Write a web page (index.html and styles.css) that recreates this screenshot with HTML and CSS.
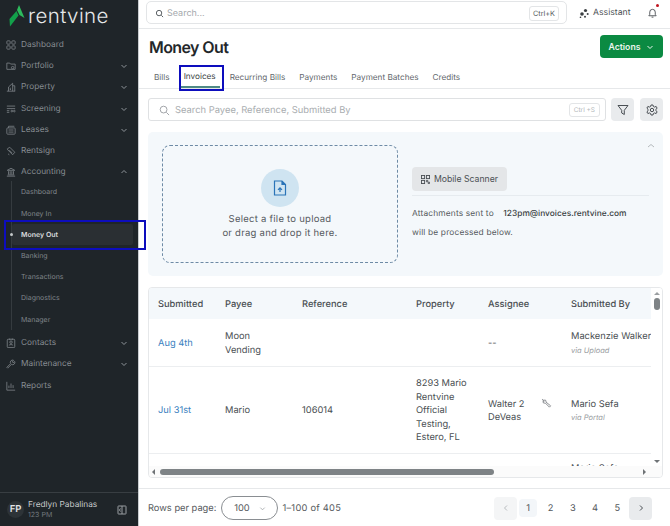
FILE: index.html
```html
<!DOCTYPE html>
<html>
<head>
<title>Money Out</title>
<link rel="stylesheet" href="styles.css">
</head>
<body>

<div class="app">

<div class="sidebar">
  <div class="logo">
    <svg width="16" height="22" viewBox="0 0 16 22"><path d="M10 0 L15.500 13 L10.500 10 L8 5 Z" fill="#2dbb5c"/><path d="M7.500 6 L9.500 10.500 L1 21.500 L0.500 14 Z" fill="#12a04a"/></svg>
    <span class="logo-text">rentvine</span>
  </div>
  <div class="nav">
    <div class="nav-item"><svg class="nav-icon" viewBox="0 0 12 12"><rect x="1" y="1" width="4" height="4" rx="1"/><rect x="7" y="1" width="4" height="4" rx="1"/><rect x="1" y="7" width="4" height="4" rx="1"/><rect x="7" y="7" width="4" height="4" rx="1"/></svg><span class="nav-label">Dashboard</span></div>
    <div class="nav-item"><svg class="nav-icon" viewBox="0 0 12 12"><path d="M1 10V2.500h3.500l1 1.200H11v6.300z"/><circle cx="8" cy="8" r="1.500"/></svg><span class="nav-label">Portfolio</span><svg class="chev" viewBox="0 0 8 8"><path d="M1.500 3l2.500 2.500L6.500 3"/></svg></div>
    <div class="nav-item"><svg class="nav-icon" viewBox="0 0 12 12"><path d="M1 11h10M3 11V6l5-4.500V11M8 4.500h2.500V11M4.500 7.500h1.500M4.500 9h1.500"/></svg><span class="nav-label">Property</span><svg class="chev" viewBox="0 0 8 8"><path d="M1.500 3l2.500 2.500L6.500 3"/></svg></div>
    <div class="nav-item"><svg class="nav-icon" viewBox="0 0 12 12"><path d="M1 2.500h10M1 5.500h10M1 8h3M1 10h3"/><circle cx="7" cy="8.500" r="1"/><circle cx="10" cy="8.500" r="1"/></svg><span class="nav-label">Screening</span><svg class="chev" viewBox="0 0 8 8"><path d="M1.500 3l2.500 2.500L6.500 3"/></svg></div>
    <div class="nav-item"><svg class="nav-icon" viewBox="0 0 12 12"><rect x="1" y="3.500" width="10" height="7.500" rx="1"/><path d="M3 3.500V1.500h7M3 6h6M3 8.500h6"/></svg><span class="nav-label">Leases</span><svg class="chev" viewBox="0 0 8 8"><path d="M1.500 3l2.500 2.500L6.500 3"/></svg></div>
    <div class="nav-item"><svg class="nav-icon" viewBox="0 0 12 12"><path d="M1.500 3.500l3-2 6 6-2.500 3-6-6zM4 5l3.500 3.500M2.500 9.500l1.500 1"/></svg><span class="nav-label">Rentsign</span></div>
    <div class="nav-item"><svg class="nav-icon" viewBox="0 0 12 12"><path d="M1.500 4L6 1.500 10.500 4zM1 11h10M2 9.500h8M3 5v4M5 5v4M7 5v4M9 5v4"/></svg><span class="nav-label">Accounting</span><svg class="chev" viewBox="0 0 8 8"><path d="M1.500 5L4 2.500 6.500 5"/></svg></div>
    <div class="subnav">
      <div class="sub-item">Dashboard</div>
      <div class="sub-item">Money In</div>
      <div class="sub-item active"><span class="dot"></span>Money Out</div>
      <div class="sub-item">Banking</div>
      <div class="sub-item">Transactions</div>
      <div class="sub-item">Diagnostics</div>
      <div class="sub-item">Manager</div>
    </div>
    <div class="nav-item"><svg class="nav-icon" viewBox="0 0 12 12"><rect x="1.500" y="1.500" width="9" height="10" rx="1"/><circle cx="6" cy="5" r="1.500"/><path d="M3.500 9c.5-1.500 4.500-1.500 5 0M4.500.500v2M7.500.500v2"/></svg><span class="nav-label">Contacts</span><svg class="chev" viewBox="0 0 8 8"><path d="M1.500 3l2.500 2.500L6.500 3"/></svg></div>
    <div class="nav-item"><svg class="nav-icon" viewBox="0 0 12 12"><path d="M1 10l4.500-4.500a2.800 2.800 0 0 1 3.500-4L7.500 3.500l1 1L10.500 3a2.800 2.800 0 0 1-4 3.500L2 11z"/></svg><span class="nav-label">Maintenance</span><svg class="chev" viewBox="0 0 8 8"><path d="M1.500 3l2.500 2.500L6.500 3"/></svg></div>
    <div class="nav-item"><svg class="nav-icon" viewBox="0 0 12 12"><path d="M1 1v10h10M3.500 8.500V5.500M6 8.500V3M8.500 8.500V5"/></svg><span class="nav-label">Reports</span></div>
  </div>
  <div class="user">
    <div class="avatar">FP</div>
    <div class="user-info">
      <div class="user-name">Fredlyn Pabalinas</div>
      <div class="user-org">123 PM</div>
    </div>
    <svg class="collapse" viewBox="0 0 10 10"><rect x="1" y="1" width="8" height="8" rx="0.500"/><path d="M5 1v8M3.500 3.500L2.500 5l1 1.500"/></svg>
  </div>
</div>

<div class="main">

  <div class="topbar">
    <div class="global-search">
      <svg class="icon-sm" viewBox="0 0 10 10"><circle cx="4.500" cy="4.500" r="3"/><path d="M7 7l2 2"/></svg>
      <span class="placeholder">Search...</span>
      <span class="kbd">Ctrl+K</span>
    </div>
    <div class="assistant">
      <svg class="icon-assist" viewBox="0 0 10 10"><circle cx="3" cy="6" r="1.800" fill="#3c4043"/><circle cx="6.500" cy="2.500" r="1.600" fill="#3c4043"/><circle cx="8.700" cy="6" r="1" fill="#3c4043"/><circle cx="6" cy="8.700" r="1" fill="#3c4043"/><circle cx="1.500" cy="9.300" r=".8" fill="#3c4043"/></svg>
      Assistant
    </div>
    <div class="bell">
      <svg viewBox="0 0 12 12" width="11" height="12"><path d="M2 9h8L9 7.500V5a3 3 0 0 0-6 0v2.500zM5 10.500h2"/></svg>
      <span class="bell-dot"></span>
    </div>
  </div>

  <div class="page-head">
    <h1 class="page-title">Money Out</h1>
    <button class="actions">Actions <svg viewBox="0 0 8 8" width="8" height="8"><path d="M1.500 3l2.500 2.500L6.500 3"/></svg></button>
  </div>

  <div class="tabs">
    <div class="tab">Bills</div>
    <div class="tab tab-on">Invoices<span class="mark mark-tab"></span></div>
    <div class="tab">Recurring Bills</div>
    <div class="tab">Payments</div>
    <div class="tab">Payment Batches</div>
    <div class="tab">Credits</div>
  </div>

  <div class="filter-row">
    <div class="filter-search">
      <svg class="icon-md" viewBox="0 0 12 12"><circle cx="5" cy="5" r="3.700"/><path d="M8 8l3 3"/></svg>
      <span class="filter-ph">Search Payee, Reference, Submitted By</span>
      <span class="kbd kbd-light">Ctrl +S</span>
    </div>
    <div class="square-btn"><svg viewBox="0 0 12 12" width="12" height="12"><path d="M1 1.500h10L7.300 6.300V10.500L4.700 9V6.300z"/></svg></div>
    <div class="square-btn"><svg viewBox="0 0 12 12" width="12" height="12"><path d="M5 1h2l.4 1.500 1.300.6 1.400-.7 1 1.700-1.100 1.100v1.600l1.100 1.100-1 1.700-1.400-.7-1.300.6L7 11H5l-.4-1.500-1.300-.6-1.400.7-1-1.700 1.100-1.100V5.200L.9 4.100l1-1.700 1.400.7 1.300-.6z"/><circle cx="6" cy="6" r="1.700"/></svg></div>
  </div>

  <div class="upload-panel">
    <div class="dropzone">
      <div class="upload-circle">
        <svg viewBox="0 0 14 16" width="14" height="16"><path d="M1.500 1h7.500l3.500 3.500V15h-11z"/><path d="M9 1v3.500h3.500" fill="#2a74b8"/><path d="M7 12V8M5 9.800L7 7.800l2 2"/></svg>
      </div>
      <div class="drop-text">Select a file to upload<br>or drag and drop it here.</div>
    </div>
    <div class="upload-side">
      <svg class="panel-chev" viewBox="0 0 8 8" width="8" height="8"><path d="M1 5l3-2.500L7 5"/></svg>
      <button class="scanner"><svg viewBox="0 0 10 10" width="9" height="9"><rect x=".5" y=".5" width="3.500" height="3.500"/><rect x="6" y=".5" width="3.500" height="3.500"/><rect x=".5" y="6" width="3.500" height="3.500"/><path d="M6 6h1.500v1.500H6zM8 8h1.500v1.500H8z"/></svg>Mobile Scanner</button>
      <div class="side-rule"></div>
      <div class="side-line">Attachments sent to <b class="email">123pm@invoices.rentvine.com</b></div>
      <div class="side-line">will be processed below.</div>
    </div>
  </div>

  <div class="table-wrap">
    <table class="invoices">
      <thead>
        <tr><th class="c1">Submitted</th><th class="c2">Payee</th><th class="c3">Reference</th><th class="c4">Property</th><th class="c5">Assignee</th><th class="c6">Submitted By</th></tr>
      </thead>
      <tbody>
        <tr class="row-a">
          <td><a class="date">Aug 4th</a></td>
          <td>Moon Vending</td>
          <td></td>
          <td></td>
          <td>--</td>
          <td class="nowrap">Mackenzie Walker<div class="via">via Upload</div></td>
        </tr>
        <tr class="row-b">
          <td><a class="date">Jul 31st</a></td>
          <td>Mario</td>
          <td>106014</td>
          <td>8293 Mario Rentvine Official Testing, Estero, FL</td>
          <td><div class="assignee"><span>Walter 2 DeVeas</span><svg viewBox="0 0 12 12" width="11" height="11"><path d="M1.500 1.500l2 1.500.5-1a2 2 0 0 1 1.500 2.500l5 4-1.300 1.500-4.500-4.500A2 2 0 0 1 2 4l1.200-.2z"/></svg></div></td>
          <td class="nowrap">Mario Sefa<div class="via">via Portal</div></td>
        </tr>
        <tr>
          <td></td><td></td><td></td><td></td><td></td>
          <td class="nowrap row-c">Mario Sefa</td>
        </tr>
      </tbody>
    </table>
    <div class="vbar"><span class="arrow-up"></span><span class="vthumb"></span><span class="arrow-down"></span></div>
    <div class="hbar"><span class="arrow-left"></span><span class="hthumb"></span><span class="arrow-right"></span></div>
  </div>

  <div class="pager">
    <span class="pager-label">Rows per page:</span>
    <div class="per-page">100 <svg viewBox="0 0 8 8" width="7" height="7"><path d="M1.500 3l2.500 2.500L6.500 3"/></svg></div>
    <span class="pager-label range">1–100 of 405</span>
    <div class="pages">
      <span class="page-arrow off"><svg viewBox="0 0 8 8" width="8" height="8"><path d="M5 1.500L2.500 4 5 6.500"/></svg></span>
      <span class="page-num current">1</span>
      <span class="page-num">2</span>
      <span class="page-num">3</span>
      <span class="page-num">4</span>
      <span class="page-num">5</span>
      <span class="page-arrow next"><svg viewBox="0 0 8 8" width="8" height="8"><path d="M3 1.500L5.500 4 3 6.500"/></svg></span>
    </div>
  </div>

</div>
</div>

<div class="mark mark-nav"></div>

</body>
</html>
```

FILE: styles.css
```css
* {
  box-sizing: border-box;
}

html, body {
  margin: 0;
  padding: 0;
  height: 526px;
  overflow: hidden;
}

body {
  font-family: Inter, "Liberation Sans", sans-serif;
  color: #3f4347;
  background: white;
  position: relative;
  text-rendering: geometricPrecision;
}

svg {
  fill: none;
  stroke: #4a4f54;
  stroke-width: 1;
  flex-shrink: 0;
}

.app {
  display: flex;
  height: 526px;
}

/* sidebar */

.sidebar {
  width: 139px;
  flex-shrink: 0;
  background: #1f2529;
  border-right: 1px solid #c9cdd0;
  display: flex;
  flex-direction: column;
}

.logo {
  height: 34.500px;
  padding: 0 0 2px 9px;
  display: flex;
  align-items: center;
  gap: 3px;
}

.logo svg {
  stroke: none;
}

.logo-text {
  font-size: 20.500px;
  font-weight: 300;
  letter-spacing: 0.400px;
  color: #e6e9ea;
  line-height: 1;
}

.nav {
  flex: 1;
  padding-top: 0;
}

.nav-item {
  height: 21.200px;
  display: flex;
  align-items: center;
  padding: 0 10px 0 6px;
  font-size: 8.300px;
  color: #868c91;
}

.nav-icon {
  width: 10px;
  height: 10px;
  stroke: #7b8186;
  margin-right: 5px;
}

.nav-label {
  flex: 1;
}

.chev {
  width: 8px;
  height: 8px;
  stroke: #8d9398;
}

.subnav {
  position: relative;
  border-left: 1px solid #353b3f;
  margin: -1.500px 0 3px 11px;
}

.sub-item {
  height: 21.200px;
  display: flex;
  align-items: center;
  padding-left: 9px;
  font-size: 7px;
  color: #80868b;
}

.sub-item.active {
  color: #d9dcde;
  font-weight: 600;
  background: #2a2f33;
  margin-right: 5px;
  position: relative;
  border-radius: 2px;
}

.dot {
  position: absolute;
  left: -2px;
  top: 9px;
  width: 3px;
  height: 3px;
  border-radius: 50%;
  background: #c4c8ca;
}

.user {
  height: 34px;
  border-top: 1px solid #383e42;
  display: flex;
  align-items: center;
  padding: 0 11px 0 7px;
}

.avatar {
  width: 17px;
  height: 17px;
  border-radius: 50%;
  background: #2d3337;
  color: #e2e4e6;
  font-size: 9.500px;
  font-weight: 600;
  display: flex;
  align-items: center;
  justify-content: center;
  margin-right: 4px;
}

.user-info {
  flex: 1;
}

.user-name {
  font-size: 8.300px;
  color: #c6cacc;
  line-height: 10px;
}

.user-org {
  font-size: 7px;
  color: #72787d;
  line-height: 10px;
}

.collapse {
  width: 10px;
  height: 10px;
  stroke: #9a9fa3;
}

/* main column */

.main {
  flex: 1;
  min-width: 0;
  display: flex;
  flex-direction: column;
}

.topbar {
  height: 29px;
  padding: 1px 7px 4px 7px;
  border-bottom: 1px solid #e6e8ea;
  display: flex;
  align-items: center;
}

.global-search {
  width: 421px;
  height: 23px;
  border: 1px solid #e3e5e7;
  border-radius: 5px;
  display: flex;
  align-items: center;
  padding: 1px 7px 0 8px;
  font-size: 9px;
}

.placeholder {
  flex: 1;
  color: #a4a8ac;
  margin-left: 3px;
}

.icon-sm {
  width: 9px;
  height: 9px;
}

.icon-assist {
  width: 10px;
  height: 10px;
  stroke: none;
}

.kbd {
  border: 1px solid #e3e5e7;
  border-radius: 3px;
  font-size: 7.300px;
  padding: 2px 3px;
  color: #555a5e;
}

.kbd-light {
  color: #b5b9bc;
  font-size: 6.500px;
  padding: 2px 4px;
}

.assistant {
  margin-left: 12px;
  padding-top: 1px;
  display: flex;
  align-items: center;
  gap: 4px;
  font-size: 8.700px;
  color: #4c5155;
}

.bell {
  margin-left: 16px;
  position: relative;
  height: 12px;
  display: flex;
}

.bell-dot {
  position: absolute;
  top: -3px;
  right: -1px;
  width: 3px;
  height: 3px;
  border-radius: 50%;
  background: #c0141f;
}

.page-head {
  height: 37px;
  padding: 0 7px 2px 10px;
  display: flex;
  justify-content: space-between;
  align-items: center;
}

.page-title {
  margin: 0;
  font-size: 16px;
  font-weight: 600;
  letter-spacing: -0.600px;
  color: #23272a;
}

.actions {
  width: 63px;
  height: 23px;
  border: none;
  border-radius: 4px;
  background: #0b8a42;
  color: #e9f5ee;
  font-family: inherit;
  font-size: 8.700px;
  font-weight: 600;
  display: flex;
  align-items: center;
  justify-content: center;
  gap: 6px;
}

.actions svg {
  stroke: #e9f5ee;
}

.tabs {
  height: 23px;
  padding-left: 15px;
  border-bottom: 1px solid #e6e8ea;
  display: flex;
  align-items: stretch;
  gap: 14px;
  font-size: 8.200px;
  color: #63686c;
}

.tab {
  display: flex;
  align-items: center;
  padding-bottom: 1px;
  position: relative;
}

.tab-on {
  color: #3a3f43;
  border-bottom: 2px solid #4f8a86;
  padding: 0 4px;
  margin: 0 -4px;
}

/* blue boxes drawn over the screenshot */

.mark {
  position: absolute;
  border: 2px solid #0d0dbd;
}

.mark-tab {
  left: -1px;
  top: -1px;
  width: 45px;
  height: 26px;
}

.mark-nav {
  left: 4px;
  top: 220px;
  width: 142px;
  height: 30px;
}

.filter-row {
  padding: 9px 7px 0 9px;
  display: flex;
  gap: 5px;
}

.filter-search {
  width: 458px;
  height: 23px;
  border: 1px solid #dfe1e3;
  border-radius: 3px;
  display: flex;
  align-items: center;
  padding: 1px 5px 0 10px;
}

.icon-md {
  width: 11px;
  height: 11px;
  stroke: #9a9ea2;
}

.filter-ph {
  flex: 1;
  margin-left: 5px;
  font-size: 9.400px;
  color: #a9adb0;
}

.square-btn {
  width: 23px;
  height: 23px;
  border-radius: 4px;
  background: #e9ebed;
  display: flex;
  align-items: center;
  justify-content: center;
}

.square-btn + .square-btn {
  margin-left: 1px;
}

.upload-panel {
  margin: 11px 7px 0 9px;
  height: 144px;
  background: #f4f8fb;
  border-radius: 5px;
  padding: 13px 0 0 14px;
  display: flex;
}

.dropzone {
  width: 236px;
  height: 118px;
  border: 1px dashed #6d8aa5;
  border-radius: 8px;
  display: flex;
  flex-direction: column;
  align-items: center;
  padding-top: 23px;
}

.upload-circle {
  width: 38px;
  height: 38px;
  border-radius: 50%;
  background: #cfe4f1;
  display: flex;
  align-items: center;
  justify-content: center;
}

.upload-circle svg {
  stroke: #2a74b8;
  stroke-width: 1.200;
}

.drop-text {
  margin-top: 6px;
  font-size: 9.500px;
  line-height: 14px;
  letter-spacing: 0.250px;
  color: #55595d;
  text-align: center;
}

.upload-side {
  flex: 1;
  padding: 22px 0 0 14px;
  position: relative;
}

.panel-chev {
  position: absolute;
  top: -3px;
  right: 8px;
  stroke: #b5babd;
}

.scanner {
  width: 95px;
  height: 24px;
  border: none;
  border-radius: 4px;
  background: #e4e6e8;
  color: #4c5155;
  font-family: inherit;
  font-size: 8.700px;
  display: flex;
  align-items: center;
  justify-content: center;
  gap: 4px;
}

.side-rule {
  height: 1px;
  margin-right: 14px;
  margin-top: 4px;
  background: #e6ebef;
}

.side-line {
  font-size: 8.400px;
  letter-spacing: 0.150px;
  color: #55595d;
  height: 19px;
  line-height: 19px;
  margin-top: 0;
}

.side-rule + .side-line {
  margin-top: 9px;
}

.email {
  font-weight: 500;
  color: #3a3f43;
  margin-left: 7px;
  letter-spacing: 0;
}

/* table */

.table-wrap {
  margin: 11px 7px 0 9px;
  height: 191px;
  border: 1px solid #e6e8ea;
  border-radius: 4px;
  position: relative;
  overflow: hidden;
}

.invoices {
  width: 515px;
  margin-left: -1px;
  table-layout: fixed;
  border-collapse: collapse;
  font-size: 9.300px;
  color: #4a4f53;
}

.invoices th {
  height: 31px;
  background: #f4f8fb;
  font-weight: 500;
  text-align: left;
  padding: 1px 0 0 10px;
  color: #4a4f53;
}

.invoices td {
  padding: 3px 6px 0 10px;
  line-height: 13.500px;
  border-bottom: 1px solid #eceef0;
}

.c1 { width: 67px; }
.c2 { width: 77px; }
.c3 { width: 114px; }
.c4 { width: 72px; }
.c5 { width: 83px; }
.c6 { width: 102px; }

.row-a td {
  height: 47px;
}

.row-b td {
  height: 87px;
}

.row-c {
  vertical-align: top;
  padding-top: 8px !important;
}

.nowrap {
  white-space: nowrap;
}

.date {
  color: #3b7fc0;
}

.via {
  font-size: 7.500px;
  font-style: italic;
  color: #9a9ea2;
}

.assignee {
  display: flex;
  justify-content: space-between;
  align-items: flex-start;
}

.assignee span {
  width: 44px;
}

.assignee svg {
  stroke: #85898d;
  margin: 0 3px 0 0;
}

.vbar {
  position: absolute;
  top: 0;
  right: 0;
  bottom: 10px;
  width: 11px;
  background: white;
}

.vthumb {
  position: absolute;
  left: 3px;
  top: 10px;
  width: 6px;
  height: 12px;
  border-radius: 3px;
  background: #7e8386;
}

.arrow-up, .arrow-down {
  position: absolute;
  left: 3px;
  width: 0;
  height: 0;
  border-left: 3px solid transparent;
  border-right: 3px solid transparent;
}

.arrow-up {
  top: 4px;
  border-bottom: 3px solid #9b9fa2;
}

.arrow-down {
  bottom: 4px;
  border-top: 3px solid #6f7376;
}

.hbar {
  position: absolute;
  left: 0;
  right: 0;
  bottom: 0;
  height: 11px;
  background: #fbfbfb;
}

.hthumb {
  position: absolute;
  left: 11px;
  top: 3px;
  width: 334px;
  height: 6px;
  border-radius: 3px;
  background: #7e8386;
}

.arrow-left, .arrow-right {
  position: absolute;
  top: 3px;
  width: 0;
  height: 0;
  border-top: 3px solid transparent;
  border-bottom: 3px solid transparent;
}

.arrow-left {
  left: 3px;
  border-right: 3px solid #6f7376;
}

.arrow-right {
  right: 16px;
  border-left: 3px solid #6f7376;
}

/* pager */

.pager {
  margin-top: 10px;
  flex: 1;
  border-top: 1px solid #e6e8ea;
  padding: 1px 18px 0 9px;
  display: flex;
  align-items: center;
  gap: 4px;
}

.pager-label {
  font-size: 9.300px;
  color: #55595d;
}

.range {
  letter-spacing: 0.250px;
}

.per-page {
  width: 57px;
  height: 24px;
  margin-left: 1px;
  border: 1px solid #8a8e92;
  border-radius: 12px;
  display: flex;
  align-items: center;
  justify-content: center;
  gap: 9px;
  font-size: 9.300px;
  color: #55595d;
}

.per-page svg {
  stroke: #a5a9ac;
}

.pages {
  margin-left: auto;
  display: flex;
  align-items: center;
  gap: 4.250px;
  font-size: 9.300px;
  color: #55595d;
}

.page-arrow {
  width: 23px;
  height: 23px;
  border-radius: 4px;
  background: #e9ebed;
  display: flex;
  align-items: center;
  justify-content: center;
}

.page-arrow.next {
  margin-left: -1.500px;
}

.page-arrow.off {
  background: #f4f5f6;
  margin-right: -2px;
}

.page-arrow.off svg {
  stroke: #b8bcbf;
}

.page-num {
  width: 18px;
  height: 18px;
  border-radius: 4px;
  display: flex;
  align-items: center;
  justify-content: center;
}

.page-num.current {
  background: #f3f6f9;
}
```
